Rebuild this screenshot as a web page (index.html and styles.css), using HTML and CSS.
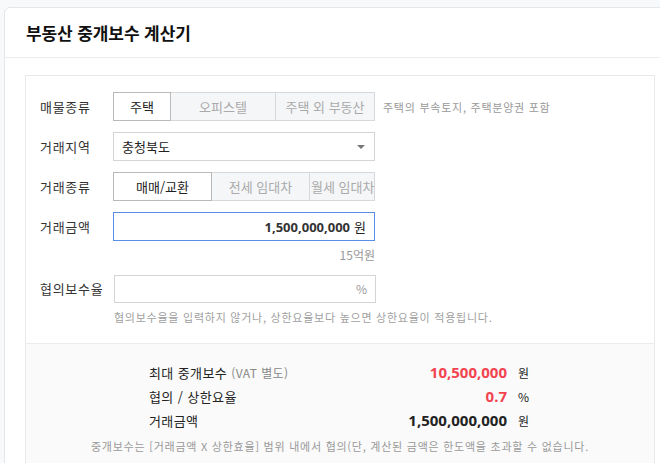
FILE: index.html
```html
<!DOCTYPE html>
<html lang="ko">
<head>
<meta charset="utf-8">
<title>부동산 중개보수 계산기</title>
<link rel="stylesheet" href="styles.css">
</head>
<body>
<div class="card">
  <div class="card-head"><h1 class="title">부동산 중개보수 계산기</h1></div>
  <div class="card-body">
    <div class="calc">
      <div class="form">
        <div class="row">
          <div class="label">매물종류</div>
          <div class="seg">
            <button class="seg-btn active w57">주택</button>
            <button class="seg-btn w105">오피스텔</button>
            <button class="seg-btn w100">주택 외 부동산</button>
          </div>
          <div class="note">주택의 부속토지, 주택분양권 포함</div>
        </div>
        <div class="row">
          <div class="label">거래지역</div>
          <div class="select">충청북도<span class="caret"></span></div>
        </div>
        <div class="row">
          <div class="label">거래종류</div>
          <div class="seg">
            <button class="seg-btn active w98">매매/교환</button>
            <button class="seg-btn w98">전세 임대차</button>
            <button class="seg-btn w66 clip">월세 임대차</button>
          </div>
        </div>
        <div class="row tight">
          <div class="label">거래금액</div>
          <div class="input focus"><span class="amount">1,500,000,000</span><span class="unit">원</span></div>
        </div>
        <div class="sub">15억원</div>
        <div class="row tight">
          <div class="label">협의보수율</div>
          <div class="input short"><span class="pct">%</span></div>
        </div>
        <div class="hint">협의보수율을 입력하지 않거나, 상한요율보다 높으면 상한요율이 적용됩니다.</div>
      </div>
      <div class="result">
        <div class="res-table">
          <div class="res-label">최대 중개보수 <span class="muted">(VAT 별도)</span></div>
          <div class="res-num red">10,500,000</div>
          <div class="res-unit">원</div>
          <div class="res-label">협의 / 상한요율</div>
          <div class="res-num red">0.7</div>
          <div class="res-unit">%</div>
          <div class="res-label">거래금액</div>
          <div class="res-num">1,500,000,000</div>
          <div class="res-unit">원</div>
        </div>
        <div class="foot">중개보수는 [거래금액 X 상한효율] 범위 내에서 협의(단, 계산된 금액은 한도액을 초과할 수 없습니다.</div>
      </div>
    </div>
  </div>
</div>
</body>
</html>
```
FILE: styles.css
```css
html, body {
  margin: 0;
  padding: 0;
  overflow: hidden;
  background: #f8f9fb;
  font-family: "Noto Sans CJK KR", "Noto Sans", sans-serif;
  color: #333;
}
.card {
  margin: 7px 0 0 4px;
  width: 720px;
  height: 520px;
  background: #fff;
  border: 1px solid #e4e6ea;
  border-radius: 6px 0 0 0;
}
.card-head {
  height: 49px;
  border-bottom: 1px solid #ebedf0;
  display: flex;
  align-items: center;
  padding-left: 21px;
}
.title {
  margin: 0;
  font-size: 17px;
  font-weight: 700;
  color: #111;
  letter-spacing: -0.1px;
}
.card-body {
  padding: 17px 0 0 20px;
}
.calc {
  width: 628px;
  border: 1px solid #e8e9eb;
  border-bottom: none;
}
.form {
  padding: 16px 0 12px 14px;
}
.row {
  display: flex;
  align-items: center;
  height: 29px;
  margin-bottom: 11px;
}
.row.tight {
  margin-bottom: 0;
}
.label {
  width: 73px;
  flex: none;
  font-size: 13px;
  color: #333;
  letter-spacing: 0.7px;
}
.seg {
  display: flex;
  width: 262px;
  height: 29px;
}
.seg-btn {
  box-sizing: border-box;
  height: 29px;
  margin: 0 0 0 -1px;
  padding: 0;
  border: 1px solid #d6d8dc;
  background: #f5f6f8;
  color: #aaa;
  font-family: inherit;
  font-size: 13px;
  white-space: nowrap;
  overflow: hidden;
}
.seg-btn:first-child { margin-left: 0; }
.seg-btn.active {
  background: #fff;
  color: #222;
  border-color: #b9b9b9;
  position: relative;
  z-index: 1;
}
.w57 { width: 58px; }
.w105 { width: 106px; }
.w100 { width: 100px; }
.w98 { width: 99px; }
.w66 { width: 66px; }
.clip { text-align: left; padding-left: 1px; }
.note {
  margin-left: 8px;
  font-size: 11px;
  color: #999;
  letter-spacing: 0.75px;
}
.select {
  box-sizing: border-box;
  width: 262px;
  height: 29px;
  border: 1px solid #d4d4d4;
  display: flex;
  align-items: center;
  justify-content: space-between;
  padding: 0 9px 0 8px;
  font-size: 13px;
  color: #222;
}
.caret {
  width: 0;
  height: 0;
  border-left: 4px solid transparent;
  border-right: 4px solid transparent;
  border-top: 4px solid #777;
}
.input {
  box-sizing: border-box;
  width: 262px;
  height: 29px;
  border: 1px solid #d4d4d4;
  display: flex;
  align-items: center;
  justify-content: flex-end;
  padding-right: 8px;
  font-size: 13px;
}
.input.focus {
  border-color: #5a8fe8;
}
.input.short {
  height: 28px;
  margin-left: 1px;
}
.amount {
  font-family: "Noto Sans", sans-serif;
  font-weight: 700;
  color: #333;
  font-size: 13px;
}
.unit {
  margin-left: 4px;
  color: #222;
}
.pct {
  color: #999;
  font-size: 12px;
}
.sub {
  width: 335px;
  height: 33px;
  line-height: 28px;
  text-align: right;
  font-size: 12px;
  color: #999;
}
.hint {
  height: 28px;
  line-height: 28px;
  padding-left: 74px;
  font-size: 11px;
  color: #a0a0a0;
  letter-spacing: 0.75px;
}
.result {
  background: #fafafa;
  border-top: 1px solid #ececec;
  padding: 16px 0 20px;
}
.res-table {
  width: 382px;
  margin: 0 auto;
  display: grid;
  grid-template-columns: 1fr auto 13px;
  column-gap: 11px;
  grid-auto-rows: 24px;
  align-items: center;
}
.res-label {
  font-size: 13px;
  color: #222;
  letter-spacing: 0.4px;
}
.muted {
  color: #888;
  font-size: 12px;
}
.res-num {
  font-family: "Noto Sans", sans-serif;
  font-weight: 700;
  font-size: 15px;
  color: #222;
  text-align: right;
}
.res-num.red {
  color: #f2434f;
}
.res-unit {
  font-size: 12px;
  color: #222;
}
.foot {
  margin-top: 6px;
  text-align: center;
  font-size: 11px;
  color: #999;
  white-space: nowrap;
  letter-spacing: 0.75px;
}
```
